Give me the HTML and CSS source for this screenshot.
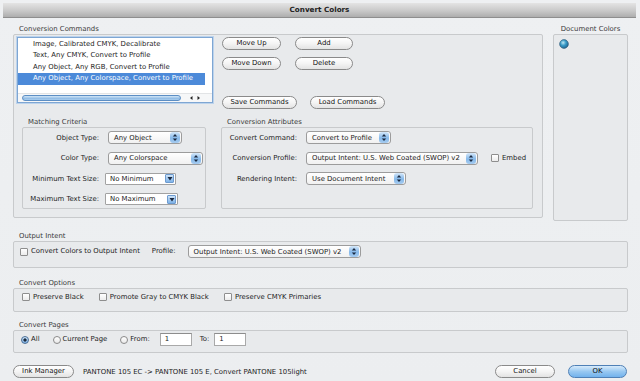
FILE: index.html
```html
<!DOCTYPE html>
<html>
<head>
<meta charset="utf-8">
<title>Convert Colors</title>
<link rel="stylesheet" href="styles.css">
</head>
<body>
<div class="dialog">
  <div class="titlebar">Convert Colors</div>

  <div class="top">
    <section class="group cc">
      <div class="glabel">Conversion Commands</div>
      <div class="box cc-box">
        <div class="cc-top">
          <div class="list">
            <div class="rows">
              <div class="row">Image, Calibrated CMYK, Decalibrate</div>
              <div class="row">Text, Any CMYK, Convert to Profile</div>
              <div class="row">Any Object, Any RGB, Convert to Profile</div>
              <div class="row sel">Any Object, Any Colorspace, Convert to Profile</div>
            </div>
            <div class="hscroll">
              <div class="thumb"></div>
              <svg class="sarrows" width="14" height="6" viewBox="0 0 14 6"><polygon points="2,3 4.5,1 4.5,5" fill="#222"/><polygon points="12,3 9.5,1 9.5,5" fill="#222"/></svg>
            </div>
          </div>
          <div class="btns">
            <div class="btn-row"><button class="btn w59">Move Up</button><button class="btn w58">Add</button></div>
            <div class="btn-row r2"><button class="btn w59">Move Down</button><button class="btn w58">Delete</button></div>
            <div class="btn-row r3"><button class="btn w75">Save Commands</button><button class="btn w75">Load Commands</button></div>
          </div>
        </div>

        <div class="cc-lower">
          <section class="sub match">
            <div class="slabel">Matching Criteria</div>
            <div class="box sub-box grid-match">
              <span class="flabel">Object Type:</span>
              <div class="popup pm w74">Any Object<span class="pa"><svg width="6" height="9" viewBox="0 0 6 9"><polygon points="0.8,3.6 3,1 5.2,3.6" fill="#1b2940"/><polygon points="0.8,5.4 3,8 5.2,5.4" fill="#1b2940"/></svg></span></div>
              <span class="flabel">Color Type:</span>
              <div class="popup pm w95">Any Colorspace<span class="pa"><svg width="6" height="9" viewBox="0 0 6 9"><polygon points="0.8,3.6 3,1 5.2,3.6" fill="#1b2940"/><polygon points="0.8,5.4 3,8 5.2,5.4" fill="#1b2940"/></svg></span></div>
              <span class="flabel">Minimum Text Size:</span>
              <div class="pulldown w71">No Minimum<span class="pd"><svg width="6" height="5" viewBox="0 0 6 5"><polygon points="0.5,1 5.5,1 3,4.5" fill="#1b2940"/></svg></span></div>
              <span class="flabel">Maximum Text Size:</span>
              <div class="pulldown w73">No Maximum<span class="pd"><svg width="6" height="5" viewBox="0 0 6 5"><polygon points="0.5,1 5.5,1 3,4.5" fill="#1b2940"/></svg></span></div>
            </div>
          </section>

          <section class="sub attr">
            <div class="slabel">Conversion Attributes</div>
            <div class="box sub-box grid-attr">
              <span class="flabel">Convert Command:</span>
              <div class="popup w85">Convert to Profile<span class="pa"><svg width="6" height="9" viewBox="0 0 6 9"><polygon points="0.8,3.6 3,1 5.2,3.6" fill="#1b2940"/><polygon points="0.8,5.4 3,8 5.2,5.4" fill="#1b2940"/></svg></span></div>
              <span class="flabel">Conversion Profile:</span>
              <div class="inline">
                <div class="popup w172">Output Intent: U.S. Web Coated (SWOP) v2<span class="pa"><svg width="6" height="9" viewBox="0 0 6 9"><polygon points="0.8,3.6 3,1 5.2,3.6" fill="#1b2940"/><polygon points="0.8,5.4 3,8 5.2,5.4" fill="#1b2940"/></svg></span></div>
                <span class="check embed-check"></span><span class="ctext">Embed</span>
              </div>
              <span class="flabel">Rendering Intent:</span>
              <div class="popup w100">Use Document Intent<span class="pa"><svg width="6" height="9" viewBox="0 0 6 9"><polygon points="0.8,3.6 3,1 5.2,3.6" fill="#1b2940"/><polygon points="0.8,5.4 3,8 5.2,5.4" fill="#1b2940"/></svg></span></div>
            </div>
          </section>
        </div>
      </div>
    </section>

    <section class="group docs">
      <div class="glabel center">Document Colors</div>
      <div class="box docs-box">
        <svg class="swatch" width="10" height="10" viewBox="0 0 10 10">
          <defs>
            <radialGradient id="sw" cx="0.4" cy="0.35" r="0.7">
              <stop offset="0" stop-color="#bfe6f2"/>
              <stop offset="0.45" stop-color="#3a9cc8"/>
              <stop offset="1" stop-color="#1c5f8c"/>
            </radialGradient>
          </defs>
          <circle cx="5" cy="5" r="4.4" fill="url(#sw)" stroke="#2a5574" stroke-width="0.6"/>
        </svg>
      </div>
    </section>
  </div>

  <section class="group wide">
    <div class="glabel">Output Intent</div>
    <div class="box wide-box oi">
      <span class="check"></span><span class="ctext">Convert Colors to Output Intent</span>
      <span class="ptext">Profile:</span>
      <div class="popup w173 oi-pop">Output Intent: U.S. Web Coated (SWOP) v2<span class="pa"><svg width="6" height="9" viewBox="0 0 6 9"><polygon points="0.8,3.6 3,1 5.2,3.6" fill="#1b2940"/><polygon points="0.8,5.4 3,8 5.2,5.4" fill="#1b2940"/></svg></span></div>
    </div>
  </section>

  <section class="group wide g2">
    <div class="glabel">Convert Options</div>
    <div class="box wide-box co">
      <span class="check"></span><span class="ctext">Preserve Black</span>
      <span class="check c2"></span><span class="ctext">Promote Gray to CMYK Black</span>
      <span class="check c3"></span><span class="ctext">Preserve CMYK Primaries</span>
    </div>
  </section>

  <section class="group wide g3">
    <div class="glabel">Convert Pages</div>
    <div class="box wide-box cp">
      <span class="radio on"></span><span class="ctext">All</span>
      <span class="radio r2"></span><span class="ctext">Current Page</span>
      <span class="radio r3"></span><span class="ctext">From:</span>
      <span class="field f1">1</span>
      <span class="ctext to">To:</span>
      <span class="field f2">1</span>
    </div>
  </section>

  <div class="footer">
    <button class="btn w61">Ink Manager</button>
    <span class="status">PANTONE 105 EC -&gt; PANTONE 105 E, Convert PANTONE 105light</span>
    <button class="btn w60 cancel">Cancel</button>
    <button class="btn w59 ok">OK</button>
  </div>
</div>
</body>
</html>
```

FILE: styles.css
```css
* { box-sizing: border-box; }
html { background: #ffffff; }
body {
  margin: 0;
  width: 640px;
  height: 381px;
  overflow: hidden;
  font-family: "DejaVu Sans", "Verdana", sans-serif;
  font-size: 6.9px;
  color: #1c1c1c;
}
.dialog {
  width: 640px;
  height: 381px;
  padding-top: 3px;
  background: linear-gradient(#eef0f2, #eceef0);
}
.titlebar {
  margin: 0 4px 0 3px;
  height: 15px;
  line-height: 14px;
  text-align: center;
  font-weight: bold;
  font-size: 7.2px;
  color: #222;
  background: linear-gradient(#e4e4e4, #c9c9c9 55%, #adadad);
  border-bottom: 1px solid #8e8e8e;
}
.top {
  display: flex;
  margin: 6px 0 0 13px;
}
.glabel {
  height: 10px;
  line-height: 10px;
  padding-left: 6px;
  color: #3a3a3a;
}
.glabel.center { padding-left: 0; text-align: center; }
.box {
  border: 1px solid #c8cacc;
  border-radius: 2px;
  background: #e8eaec;
}
.cc { width: 530px; }
.cc-box {
  height: 184px;
  padding: 2px 3px 0 3px;
}
.cc-top { display: flex; }
.list {
  width: 196px;
  height: 66px;
  background: #fff;
  border: 1px solid #7ea6d3;
  box-shadow: 0 0 0 1px #bcd3ec;
  display: flex;
  flex-direction: column;
}
.rows { padding-top: 0.5px; }
.row {
  width: 187px;
  height: 11.5px;
  line-height: 11.5px;
  padding-left: 15px;
  white-space: nowrap;
}
.row.sel { background: #4c8ad9; color: #fff; }
.hscroll {
  margin-top: auto;
  height: 9px;
  display: flex;
  align-items: center;
  padding-left: 4px;
  background: #f6f7f8;
  border-top: 1px solid #e2e4e6;
}
.thumb {
  width: 159px;
  height: 6px;
  border-radius: 3px;
  border: 1px solid #5c8ec4;
  background: linear-gradient(#d2e6f7, #92bde6 60%, #a9cdee);
}
.sarrows { margin-left: 7px; }
.btns { margin-left: 9px; }
.btn-row { display: flex; gap: 14px; }
.btn-row.r2 { margin-top: 7px; }
.btn-row.r3 { margin-top: 26px; gap: 13px; }
.btn {
  height: 13px;
  padding: 0;
  font: inherit;
  color: #111;
  line-height: 11px;
  text-align: center;
  border: 1px solid #8a8a8a;
  border-radius: 7px;
  background: linear-gradient(#ffffff, #f4f4f4 50%, #e3e3e3);
}
.w58 { width: 58px; }
.w59 { width: 59px; }
.w60 { width: 60px; }
.w61 { width: 61px; }
.w75 { width: 75px; }
.cc-lower {
  display: flex;
  margin-top: 8px;
  padding-left: 5px;
}
.slabel {
  height: 10px;
  line-height: 10px;
  padding-left: 6px;
  color: #3a3a3a;
}
.match { width: 184px; }
.attr { width: 312px; margin-left: 15px; }
.sub-box {
  height: 82px;
  padding-top: 3px;
  display: grid;
  grid-auto-rows: 13px;
  row-gap: 7.5px;
  align-items: center;
}
.grid-match { grid-template-columns: 76px auto; column-gap: 6px; }
.grid-attr { grid-template-columns: 75px auto; column-gap: 9px; }
.flabel { text-align: right; white-space: nowrap; }
.popup {
  height: 13px;
  display: flex;
  align-items: center;
  justify-content: space-between;
  padding: 0 1px 0 5px;
  border: 1px solid #9c9c9c;
  border-radius: 3px;
  background: linear-gradient(#ffffff, #f1f1f1);
  white-space: nowrap;
}
.pm { margin-left: 3px; }
.w74 { width: 74px; }
.w95 { width: 95px; }
.w85 { width: 85px; }
.w100 { width: 100px; }
.w172 { width: 172px; }
.w173 { width: 173px; }
.w71 { width: 71px; }
.w73 { width: 73px; }
.pa {
  width: 10px;
  height: 11px;
  display: flex;
  align-items: center;
  justify-content: center;
  border-radius: 3px;
  background: linear-gradient(#d4e7f9, #86b9ea 55%, #a5cbf0);
}
.pulldown {
  height: 12px;
  display: flex;
  align-items: center;
  justify-content: space-between;
  padding: 0 1px 0 4px;
  border: 1px solid #a2a2a2;
  border-radius: 1px;
  background: #fff;
  white-space: nowrap;
}
.pd {
  width: 9px;
  height: 9px;
  display: flex;
  align-items: center;
  justify-content: center;
  border-radius: 1px;
  border: 1px solid #6d9bd0;
  background: linear-gradient(#cfe4f8, #7fb3e8);
}
.inline { display: flex; align-items: center; }
.check {
  width: 8px;
  height: 8px;
  flex: none;
  border: 1px solid #8e8e8e;
  border-radius: 1px;
  background: linear-gradient(#ffffff, #ececec);
}
.embed-check { margin-left: 13px; }
.ctext { margin-left: 3px; white-space: nowrap; }
.docs { width: 75px; margin-left: 10px; }
.docs-box {
  height: 187px;
  padding: 4px 5px;
}
.swatch { display: block; }
.wide { width: 615px; margin: 10px 0 0 13px; }
.g3 { margin-top: 8px; }
.wide-box { display: flex; align-items: center; }
.oi { height: 27px; padding: 3px 0 0 6px; align-items: flex-start; }
.oi .check { margin-top: 2.5px; }
.oi .ctext { line-height: 13px; }
.ptext { margin-left: 12px; line-height: 13px; }
.oi-pop { margin-left: 12px; }
.co { height: 24px; padding: 3px 0 0 8px; align-items: flex-start; }
.co .ctext { line-height: 10px; }
.co .check { margin-top: 1px; }
.c2 { margin-left: 15px; }
.c3 { margin-left: 15px; }
.cp { height: 23px; padding: 2px 0 0 7px; align-items: flex-start; }
.cp .ctext { line-height: 13px; margin-left: 2px; }
.radio {
  width: 8px;
  height: 8px;
  flex: none;
  margin-top: 2.5px;
  border: 1px solid #8a8a8a;
  border-radius: 50%;
  background: linear-gradient(#ffffff, #e8e8e8);
}
.radio.on {
  border-color: #4b6f96;
  background: radial-gradient(circle, #1b2a3c 0 1.4px, transparent 1.8px), linear-gradient(#cde3f8, #7fb2e6);
}
.radio.r2 { margin-left: 13px; }
.radio.r3 { margin-left: 13px; }
.field {
  width: 32px;
  height: 13px;
  line-height: 11px;
  padding-left: 4px;
  background: #fff;
  border: 1px solid #a9a9a9;
  border-top-color: #8d8d8d;
}
.f1 { margin-left: 10px; }
.to { margin-left: 8px !important; }
.f2 { margin-left: 5px; }
.footer {
  display: flex;
  align-items: center;
  margin: 12px 13px 0 13px;
  height: 13px;
}
.status { margin-left: 9px; white-space: nowrap; }
.cancel { margin-left: auto; }
.ok {
  margin-left: 13px;
  border-color: #4f80b6;
  background: linear-gradient(#d7ebfb, #98c8f1 50%, #72b2ec);
}
```
